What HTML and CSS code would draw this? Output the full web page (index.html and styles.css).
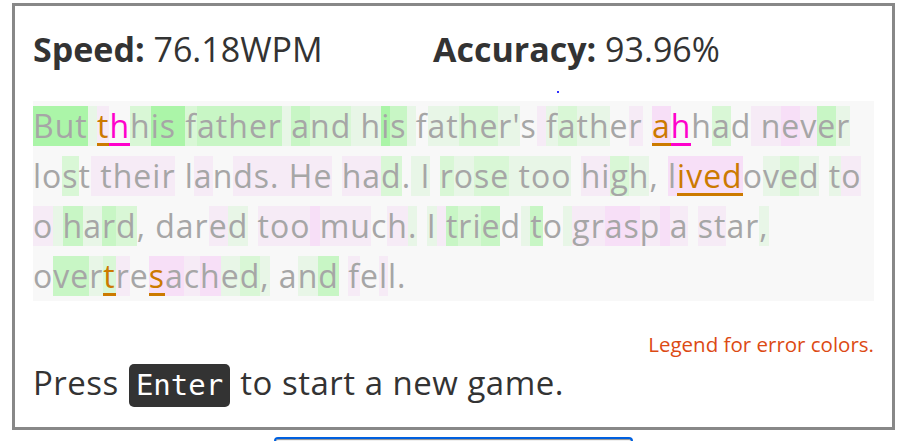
FILE: index.html
```html
<!DOCTYPE html>
<html lang="en">
<head>
<meta charset="utf-8">
<title>Typing game</title>
<link rel="stylesheet" href="styles.css">
</head>
<body>
<div class="game">
  <div class="stats">
    <div class="stat stat-speed"><span class="label">Speed:</span> 76.18WPM</div>
    <div class="stat"><span class="label">Accuracy:</span> 93.96%</div>
  </div>
  <span class="caret"></span>
  <div class="typed">
    <div class="line"><span class="a">B</span><span class="a">u</span><span class="a">t</span><span class="d"> </span><span class="p eo">t</span><span class="em">h</span><span class="c">h</span><span class="a">i</span><span class="a">s</span><span class="a"> </span><span class="c">f</span><span class="b">a</span><span class="b">t</span><span class="b">h</span><span class="b">e</span><span class="b">r</span><span class="d"> </span><span class="b">a</span><span class="c">n</span><span class="c">d</span><span class="d"> </span><span class="d">h</span><span class="a">i</span><span class="b">s</span><span class="d"> </span><span>f</span><span class="d">a</span><span class="d">t</span><span class="c">h</span><span class="c">e</span><span class="d">r</span><span class="d">'</span><span>s</span><span class="p"> </span><span class="d">f</span><span class="c">a</span><span class="d">t</span><span class="d">h</span><span>e</span><span class="p">r</span><span> </span><span class="q eo">a</span><span class="em">h</span><span>h</span><span class="c">a</span><span>d</span><span class="p"> </span><span class="p">n</span><span class="q">e</span><span class="p">v</span><span class="b">e</span><span class="d">r</span></div>
    <div class="line"><span>l</span><span>o</span><span class="c">s</span><span>t</span><span class="p"> </span><span class="p">t</span><span class="p">h</span><span class="p">e</span><span class="p">i</span><span class="p">r</span><span> </span><span>l</span><span class="p">a</span><span>n</span><span class="p">d</span><span class="p">s</span><span class="p">.</span><span class="p"> </span><span class="p">H</span><span class="p">e</span><span> </span><span class="p">h</span><span class="p">a</span><span class="c">d</span><span>.</span><span class="d"> </span><span class="d">I</span><span> </span><span class="c">r</span><span class="d">o</span><span class="c">s</span><span class="c">e</span><span class="d"> </span><span class="d">t</span><span class="d">o</span><span class="d">o</span><span> </span><span class="p">h</span><span class="p">i</span><span class="c">g</span><span class="d">h</span><span>,</span><span> </span><span class="q">l</span><span class="q eo">i</span><span class="q eo">v</span><span class="q eo">e</span><span class="q eo">d</span><span>o</span><span class="d">v</span><span class="c">e</span><span class="d">d</span><span> </span><span class="d">t</span><span class="p">o</span></div>
    <div class="line"><span class="p">o</span><span class="d"> </span><span class="b">h</span><span class="d">a</span><span class="b">r</span><span class="c">d</span><span>,</span><span> </span><span>d</span><span>a</span><span>r</span><span class="p">e</span><span class="d">d</span><span> </span><span class="p">t</span><span class="p">o</span><span class="p">o</span><span class="q"> </span><span class="p">m</span><span class="p">u</span><span>c</span><span class="p">h</span><span class="d">.</span><span> </span><span class="d">I</span><span class="p"> </span><span class="b">t</span><span class="c">r</span><span class="c">i</span><span class="b">e</span><span>d</span><span class="d"> </span><span class="b">t</span><span>o</span><span class="d"> </span><span class="p">g</span><span class="p">r</span><span class="q">a</span><span class="q">s</span><span class="p">p</span><span class="q"> </span><span class="p">a</span><span> </span><span class="p">s</span><span class="p">t</span><span>a</span><span>r</span><span class="d">,</span></div>
    <div class="line"><span>o</span><span class="b">v</span><span class="b">e</span><span class="d">r</span><span class="c eo">t</span><span class="p">r</span><span>e</span><span class="q eo">s</span><span class="q">a</span><span class="p">c</span><span class="q">h</span><span class="d">e</span><span class="c">d</span><span class="d">,</span><span> </span><span>a</span><span class="d">n</span><span class="b">d</span><span> </span><span class="p">f</span><span>e</span><span class="p">l</span><span>l</span><span>.</span></div>
  </div>
  <div class="legend">Legend for error colors.</div>
  <div class="prompt">Press <kbd class="key">Enter</kbd> to start a new game.</div>
</div>
<div class="actions"><div class="focus-button"></div></div>
</body>
</html>
```
FILE: styles.css
```css
html, body {
  margin: 0;
  padding: 0;
  background: #ffffff;
}

html {
  height: 441px;
  overflow: hidden;
}

body {
  font-family: "Open Sans", "Noto Sans", sans-serif;
  color: #333333;
  height: 441px;
  overflow: hidden;
}

.game {
  position: relative;
  box-sizing: border-box;
  width: 883px;
  margin: 3px 0 0 12px;
  border: 3px solid #888888;
  padding: 19px 18px 20px 18px;
}

.stats {
  display: flex;
  font-size: 34px;
  line-height: 48px;
  height: 48px;
  color: #333333;
}

.stat-speed {
  width: 400px;
}

.label {
  font-weight: 700;
}

.caret {
  position: absolute;
  left: 542px;
  top: 85px;
  width: 2px;
  height: 2px;
  background: #3030ff;
}

.typed {
  margin-top: 28px;
  background: #f8f8f8;
  color: #a6a6a6;
  font-size: 32px;
  letter-spacing: 1px;
}

.line {
  display: flex;
  align-items: center;
  height: 50px;
}

.line span {
  display: block;
  height: 40px;
  line-height: 40px;
  white-space: pre;
  box-sizing: border-box;
}

.line .a { background: #abf5a8; }
.line .b { background: #c8f6c5; }
.line .c { background: #d9f7d6; }
.line .d { background: #e8f6e7; }
.line .p { background: #f6ebf6; }
.line .q { background: #f7dff7; }

.line .eo {
  color: #cc7a00;
  border-bottom: 3px solid #cc7a00;
}

.line .em {
  color: #ff00cc;
  border-bottom: 3px solid #ff00cc;
}

.legend {
  margin-top: 31px;
  text-align: right;
  color: #dc4a14;
  font-size: 20.5px;
  line-height: 24px;
}

.prompt {
  margin-top: 3px;
  font-size: 33px;
  letter-spacing: 0.5px;
  line-height: 48px;
  color: #333333;
}

.key {
  display: inline-block;
  height: 43px;
  line-height: 43px;
  padding: 0 7px;
  margin: 0 1px;
  background: #333333;
  color: #ffffff;
  border-radius: 5px;
  font-family: "DejaVu Sans Mono", "Liberation Mono", monospace;
  font-size: 29px;
  letter-spacing: 0;
}

.actions {
  display: flex;
  justify-content: center;
  width: 907px;
  margin-top: 7px;
}

.focus-button {
  box-sizing: border-box;
  width: 359px;
  height: 4px;
  border: 2px solid #0060df;
  border-bottom: 0;
  border-radius: 5px 5px 0 0;
  box-shadow: inset 0 1px 0 0 #9a9a9a;
  background: #f0f0f0;
}
```
